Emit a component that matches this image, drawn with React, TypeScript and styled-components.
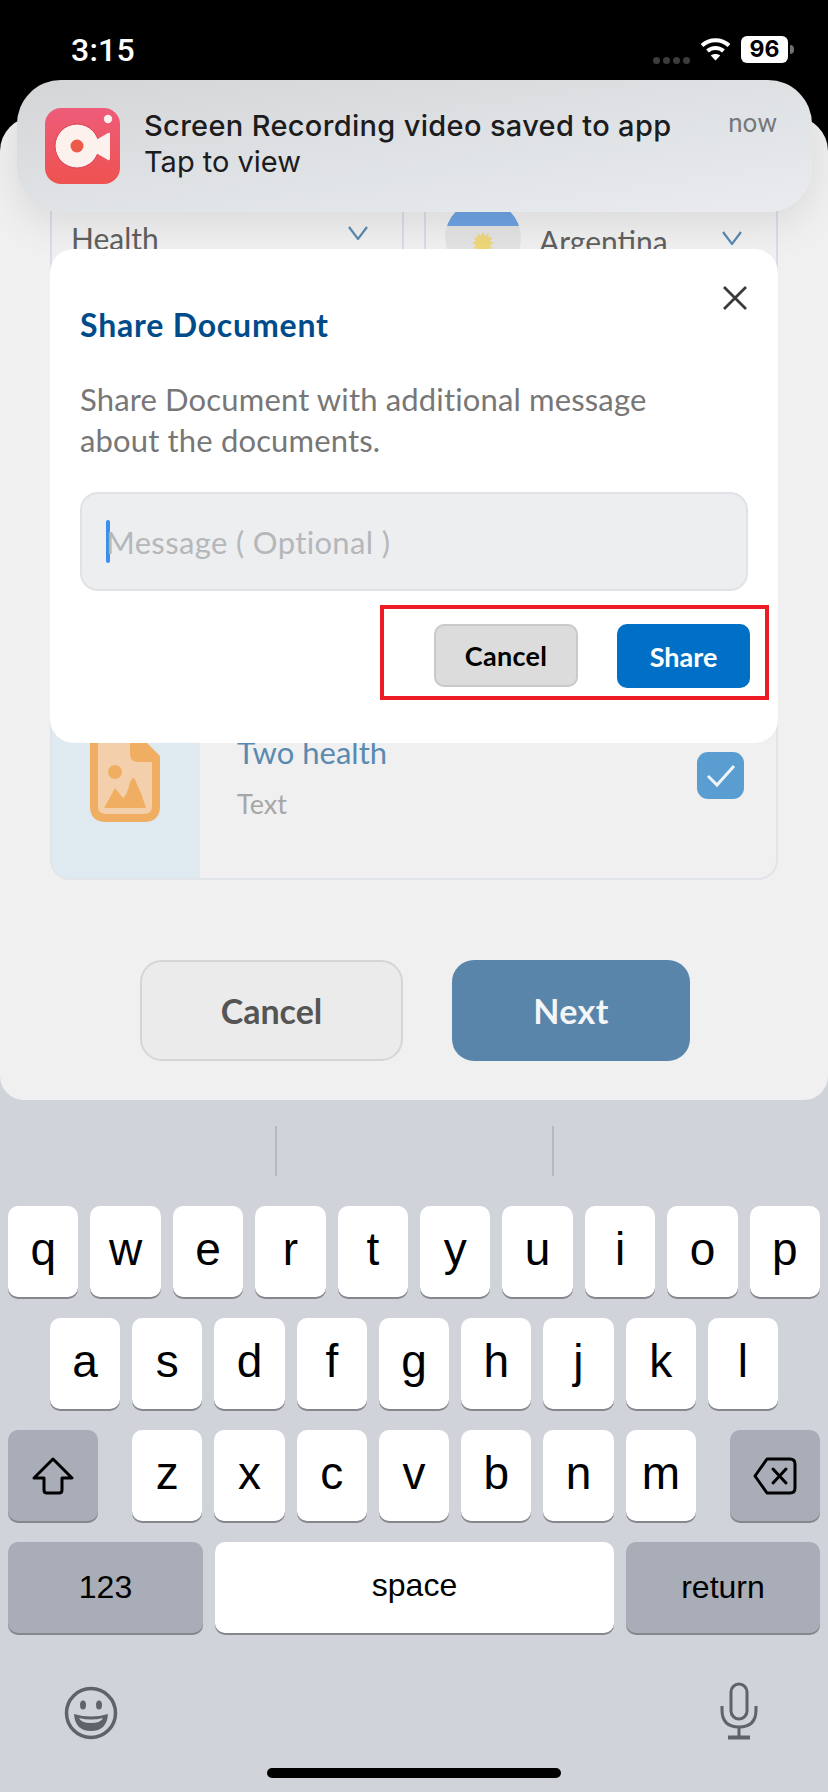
import React from "react";
import styled, { createGlobalStyle } from "styled-components";

const Global = createGlobalStyle`
  html, body { margin: 0; padding: 0; background: #000; }
  * { box-sizing: border-box; }
`;

const Frame = styled.div`
  position: relative;
  width: 828px;
  height: 1792px;
  overflow: hidden;
  display: flex;
  flex-direction: column;
  background: #d0d3da;
  font-family: Lato, "Open Sans", sans-serif;
`;

const StatusBar = styled.div`
  height: 117px;
  flex: none;
  background: #000;
  color: #fff;
  display: flex;
  justify-content: space-between;
  align-items: flex-start;
  padding: 36px 40px 0 71px;
`;
const Time = styled.div`
  font-family: Roboto, sans-serif;
  font-weight: 500;
  font-size: 32px;
  line-height: 28px;
  letter-spacing: 0.2px;
`;
const StatusIcons = styled.div`
  display: flex;
  align-items: flex-start;
`;
const SignalDots = styled.div`
  display: flex;
  gap: 3px;
  margin: 21px 10px 0 0;
`;
const SignalDot = styled.i`
  width: 7px;
  height: 7px;
  border-radius: 50%;
  background: #3d3d3d;
`;
const Battery = styled.div`
  width: 47px;
  height: 27px;
  margin-left: 10px;
  border-radius: 6px;
  background: #fff;
  color: #000;
  font-family: Inter, sans-serif;
  font-weight: 700;
  font-size: 23px;
  line-height: 27px;
  text-align: center;
  position: relative;
  &::after {
    content: "";
    position: absolute;
    right: -6px;
    top: 9px;
    width: 4px;
    height: 9px;
    border-radius: 0 4px 4px 0;
    background: #6f6f6f;
  }
`;

const SheetArea = styled.div`
  height: 983px;
  flex: none;
  background: linear-gradient(#000 50%, #d0d3da 50%);
`;
const Sheet = styled.div`
  height: 100%;
  background: #f0f0f0;
  border-radius: 34px 34px 24px 24px;
  padding: 71px 50px 0 50px;
  display: flex;
  flex-direction: column;
`;
const SelectRow = styled.div`
  display: flex;
  gap: 20px;
`;
const Select = styled.div`
  flex: 1;
  height: 100px;
  border: 2px solid #d6dde6;
  display: flex;
  align-items: center;
  padding: 0 34px 0 ${(p: { $pad: number }) => p.$pad}px;
  color: #5f5f5f;
  font-size: 30px;
`;
const SelectLabel = styled.span`
  flex: 1;
  position: relative;
  top: ${(p: { $drop: number }) => p.$drop}px;
`;
const FlagSlot = styled.svg`
  width: 76px;
  height: 76px;
  margin-right: 18px;
  flex: none;
`;
const Chevron = styled.svg`
  width: 20px;
  height: 14px;
  flex: none;
  position: relative;
  top: ${(p: { $drop: number }) => p.$drop}px;
`;

const ListCard = styled.div`
  margin-top: 22px;
  height: 570px;
  border: 2px solid #e1e4e8;
  border-radius: 20px;
  overflow: hidden;
  display: flex;
  flex-direction: column;
  justify-content: flex-end;
`;
const ListRow = styled.div`
  height: 205px;
  display: flex;
  align-items: center;
`;
const Thumb = styled.div`
  width: 148px;
  height: 100%;
  flex: none;
  padding-right: 3px;
  background: #dfe9f0;
  display: flex;
  align-items: center;
  justify-content: center;
`;
const RowText = styled.div`
  flex: 1;
  padding-left: 37px;
  padding-top: 2px;
`;
const RowTitle = styled.div`
  font-size: 31px;
  line-height: 36px;
  color: #5a8ab0;
`;
const RowSub = styled.div`
  font-size: 27px;
  line-height: 30px;
  margin-top: 19px;
  color: #a6a6a6;
`;
const CheckBox = styled.div`
  width: 47px;
  height: 47px;
  margin-right: 32px;
  border-radius: 11px;
  background: #5a9dd0;
  display: flex;
  align-items: center;
  justify-content: center;
`;

const Actions = styled.div`
  margin: 80px 0 0 90px;
  display: flex;
  gap: 49px;
`;
const GhostButton = styled.div`
  width: 263px;
  height: 101px;
  border: 2px solid #d5d5d5;
  border-radius: 22px;
  background: #ebebeb;
  color: #555;
  font-weight: 700;
  font-size: 34px;
  display: flex;
  align-items: center;
  justify-content: center;
`;
const NextButton = styled(GhostButton)`
  width: 238px;
  border: none;
  background: #5985aa;
  color: #f3f5f7;
  letter-spacing: 0.4px;
`;

const Keyboard = styled.div`
  flex: 1;
  background: #d0d3da;
  display: flex;
  flex-direction: column;
  align-items: stretch;
`;
const Suggestions = styled.div`
  height: 106px;
  padding-top: 26px;
  display: flex;
  justify-content: center;
  gap: 275px;
`;
const Divider = styled.i`
  width: 2px;
  height: 50px;
  background: #b6b9be;
`;
const KeyRow = styled.div`
  display: flex;
  height: 91px;
  margin-bottom: 21px;
  padding: 0 ${(p: { $pad: number }) => p.$pad}px;
  gap: 12px;
`;
const Key = styled.div`
  flex: 1;
  min-width: 0;
  background: #fff;
  border-radius: 10px;
  box-shadow: 0 2px 0 #85878c;
  color: #000;
  font-family: "Liberation Sans", Arial, sans-serif;
  font-size: 46px;
  padding-bottom: 6px;
  display: flex;
  align-items: center;
  justify-content: center;
`;
const ModKey = styled(Key)`
  flex: none;
  width: ${(p: { $w: number }) => p.$w}px;
  background: #a8adb7;
  font-size: 32px;
  padding-bottom: 0;
`;
const SpaceKey = styled(Key)`
  font-size: 32px;
  padding-bottom: 4px;
`;
const LetterGroup = styled.div`
  flex: 1;
  display: flex;
  gap: 12px;
  margin: 0 22px;
`;
const BottomIcons = styled.div`
  display: flex;
  justify-content: space-between;
  align-items: flex-end;
  padding: 28px 70px 0 64px;
`;
const HomeBar = styled.div`
  width: 294px;
  height: 10px;
  margin: 28px auto 0;
  border-radius: 5px;
  background: #000;
`;

const Banner = styled.div`
  position: absolute;
  left: 17px;
  top: 80px;
  width: 795px;
  height: 132px;
  border-radius: 44px;
  background: linear-gradient(172deg, #d4d5d7 0%, #e1e4e7 60%, #e9ebee 100%);
  box-shadow: 0 10px 40px rgba(0, 0, 0, 0.1);
  display: flex;
  padding: 28px 35px 0 28px;
`;
const AppIcon = styled.svg`
  width: 75px;
  height: 76px;
  flex: none;
`;
const BannerText = styled.div`
  flex: 1;
  padding-left: 24px;
  font-family: Inter, sans-serif;
  font-size: 29px;
  line-height: 36px;
  color: #1c1c1e;
`;
const BannerTitle = styled.div`
  font-weight: 500;
  letter-spacing: 0.33px;
`;
const BannerTime = styled.div`
  font-family: Roboto, sans-serif;
  font-size: 26px;
  line-height: 30px;
  color: #77787a;
`;

const Modal = styled.div`
  position: absolute;
  left: 50px;
  top: 249px;
  width: 728px;
  height: 494px;
  border-radius: 24px;
  background: #fff;
  padding: 36px 30px 0 30px;
  display: flex;
  flex-direction: column;
`;
const ModalHead = styled.div`
  display: flex;
  justify-content: space-between;
  align-items: flex-start;
`;
const ModalTitle = styled.div`
  margin-top: 20px;
  font-weight: 700;
  font-size: 32px;
  letter-spacing: 0.8px;
  line-height: 40px;
  color: #004c8b;
`;
const CloseIcon = styled.svg`
  width: 26px;
  height: 26px;
`;
const ModalBody = styled.div`
  margin-top: 34px;
  font-size: 31px;
  letter-spacing: 0.15px;
  line-height: 41px;
  color: #777;
`;
const MessageBox = styled.div`
  margin-top: 31px;
  height: 99px;
  border: 2px solid #e0e2e5;
  border-radius: 18px;
  background: #edeef0;
  display: flex;
  align-items: center;
  padding-left: 24px;
  font-size: 31px;
  letter-spacing: 0.35px;
  color: #b5b7ba;
`;
const Caret = styled.i`
  width: 4px;
  height: 43px;
  margin-right: -4px;
  border-radius: 2px;
  background: #3e8ef0;
`;
const Highlight = styled.div`
  align-self: flex-end;
  margin: 14px -21px 0 0;
  width: 389px;
  height: 95px;
  border: 4px solid #ed1c24;
  padding: 15px 15px 0 50px;
  display: flex;
  justify-content: space-between;
  align-items: flex-start;
`;
const SmallCancel = styled.div`
  width: 144px;
  height: 63px;
  border: 2px solid #c9c9c9;
  border-radius: 10px;
  background: #dcdcdc;
  color: #000;
  font-weight: 700;
  font-size: 27px;
  letter-spacing: 0.3px;
  display: flex;
  align-items: center;
  justify-content: center;
`;
const SmallShare = styled(SmallCancel)`
  width: 133px;
  height: 64px;
  border: none;
  background: #0070c6;
  color: #fff;
  letter-spacing: 0;
`;

const top = ["q", "w", "e", "r", "t", "y", "u", "i", "o", "p"];
const mid = ["a", "s", "d", "f", "g", "h", "j", "k", "l"];
const low = ["z", "x", "c", "v", "b", "n", "m"];

export default function App() {
  return (
    <Frame>
      <Global />
      <StatusBar>
        <Time>3:15</Time>
        <StatusIcons>
          <SignalDots>
            <SignalDot /><SignalDot /><SignalDot /><SignalDot />
          </SignalDots>
          <svg width="31" height="25" viewBox="0 0 31 25" fill="none" stroke="#fff" strokeWidth="4">
            <path d="M2 9.5C9.5 2.5 21.5 2.5 29 9.5" />
            <path d="M7.5 15C12 11 19 11 23.5 15" />
            <path d="M15.5 24.5L10.8 19.6C13.3 17.6 17.7 17.6 20.2 19.6Z" fill="#fff" stroke="none" />
          </svg>
          <Battery>96</Battery>
        </StatusIcons>
      </StatusBar>

      <SheetArea>
        <Sheet>
          <SelectRow>
            <Select $pad={19}>
              <SelectLabel $drop={0}>Health</SelectLabel>
              <Chevron $drop={-5} viewBox="0 0 20 14" fill="none" stroke="#5a8ab0" strokeWidth="2.2">
                <path d="M1 1L10 13L19 1" />
              </Chevron>
            </Select>
            <Select $pad={19}>
              <FlagSlot viewBox="0 0 76 76">
                <defs>
                  <clipPath id="flagClip"><circle cx="38" cy="38" r="38" /></clipPath>
                </defs>
                <g clipPath="url(#flagClip)">
                  <rect width="76" height="76" fill="#e3e3e3" />
                  <rect width="76" height="26" fill="#6da3e2" />
                  <path
                    d="M38 32L40 36L43.5 33.5L43.5 37.5L47.5 37.5L45 41L49 43L45 45L47.5 48.5L43.5 48.5L43.5 52.5L40 50L38 54L36 50L32.5 52.5L32.5 48.5L28.5 48.5L31 45L27 43L31 41L28.5 37.5L32.5 37.5L32.5 33.5L36 36Z"
                    fill="#eed67a"
                  />
                </g>
              </FlagSlot>
              <SelectLabel $drop={3}>Argentina</SelectLabel>
              <Chevron $drop={0} viewBox="0 0 20 14" fill="none" stroke="#5a8ab0" strokeWidth="2.2">
                <path d="M1 1L10 13L19 1" />
              </Chevron>
            </Select>
          </SelectRow>

          <ListCard>
            <ListRow>
              <Thumb>
                <svg width="70" height="92" viewBox="0 0 70 92">
                  <path d="M12 0H44L70 26V76Q70 92 54 92H16Q0 92 0 76V12Q0 0 12 0Z" fill="#f0ae62" />
                  <path d="M10 8H40V24Q40 32 48 32H62V76Q62 84 54 84H16Q8 84 8 76V10Z" fill="#f3d0ab" />
                  <circle cx="25" cy="42" r="7" fill="#f0ae62" />
                  <path d="M14 78L25 58L33 68Q37 66 40 52Q44 44 46 52Q52 64 56 78Z" fill="#f0ae62" />
                </svg>
              </Thumb>
              <RowText>
                <RowTitle>Two health</RowTitle>
                <RowSub>Text</RowSub>
              </RowText>
              <CheckBox>
                <svg width="30" height="24" viewBox="0 0 30 24" fill="none" stroke="#eef4f8" strokeWidth="3">
                  <path d="M2 12L11 21L28 2" />
                </svg>
              </CheckBox>
            </ListRow>
          </ListCard>

          <Actions>
            <GhostButton>Cancel</GhostButton>
            <NextButton>Next</NextButton>
          </Actions>
        </Sheet>
      </SheetArea>

      <Keyboard>
        <Suggestions>
          <Divider />
          <Divider />
        </Suggestions>
        <KeyRow $pad={8}>
          {top.map((k) => <Key key={k}>{k}</Key>)}
        </KeyRow>
        <KeyRow $pad={50}>
          {mid.map((k) => <Key key={k}>{k}</Key>)}
        </KeyRow>
        <KeyRow $pad={8}>
          <ModKey $w={90}>
            <svg width="42" height="38" viewBox="0 0 42 38" fill="none" stroke="#000" strokeWidth="3" strokeLinejoin="round">
              <path d="M21 2L40 21H30V33Q30 36 27 36H15Q12 36 12 33V21H2Z" />
            </svg>
          </ModKey>
          <LetterGroup>
            {low.map((k) => <Key key={k}>{k}</Key>)}
          </LetterGroup>
          <ModKey $w={90}>
            <svg width="44" height="38" viewBox="0 0 44 38" fill="none" stroke="#000" strokeWidth="3" strokeLinejoin="round">
              <path d="M14 2H37Q42 2 42 7V31Q42 36 37 36H14L2 19Z" />
              <path d="M20 12L33 26M33 12L20 26" strokeLinecap="round" />
            </svg>
          </ModKey>
        </KeyRow>
        <KeyRow $pad={8}>
          <ModKey $w={195}>123</ModKey>
          <SpaceKey>space</SpaceKey>
          <ModKey $w={194}>return</ModKey>
        </KeyRow>
        <BottomIcons>
          <svg width="54" height="54" viewBox="0 0 54 54" fill="none">
            <circle cx="27" cy="27" r="24.5" stroke="#5f6268" strokeWidth="3.5" />
            <ellipse cx="19" cy="19" rx="3" ry="4.5" fill="#5f6268" />
            <ellipse cx="35" cy="19" rx="3" ry="4.5" fill="#5f6268" />
            <path d="M10 28Q27 33 44 28Q43 45 27 45Q11 45 10 28Z" fill="#5f6268" />
            <path d="M15 32Q27 35 39 32Q37 37 27 37Q17 37 15 32Z" fill="#d0d3da" />
          </svg>
          <svg width="38" height="58" viewBox="0 0 38 58" fill="none" stroke="#5f6268" strokeWidth="3">
            <rect x="11" y="2" width="16" height="35" rx="8" />
            <path d="M2 24V28Q2 45 19 45Q36 45 36 28V24" />
            <path d="M19 45V54" />
            <path d="M8 55.5H30" strokeWidth="4" />
          </svg>
        </BottomIcons>
        <HomeBar />
      </Keyboard>

      <Banner>
        <AppIcon viewBox="0 0 75 76">
          <defs>
            <linearGradient id="appFill" x1="0" y1="0" x2="0" y2="1">
              <stop offset="0" stopColor="#ee5c7a" />
              <stop offset="1" stopColor="#ee5250" />
            </linearGradient>
          </defs>
          <rect width="75" height="76" rx="16" fill="url(#appFill)" />
          <circle cx="63" cy="11" r="4.2" fill="#fdf1ee" />
          <circle cx="32" cy="38" r="22" fill="#fdf1ee" stroke="#d93f4e" strokeWidth="1" />
          <circle cx="32" cy="38" r="6.5" fill="#ee5a4a" />
          <path d="M51 32L63 25Q65 24 65 26V50Q65 53 63 52L51 45Z" fill="#fdf1ee" />
        </AppIcon>
        <BannerText>
          <BannerTitle>Screen Recording video saved to app</BannerTitle>
          <div>Tap to view</div>
        </BannerText>
        <BannerTime>now</BannerTime>
      </Banner>

      <Modal>
        <ModalHead>
          <ModalTitle>Share Document</ModalTitle>
          <CloseIcon viewBox="0 0 26 26" fill="none" stroke="#3a3a3a" strokeWidth="2.8">
            <path d="M2 2L24 24M24 2L2 24" />
          </CloseIcon>
        </ModalHead>
        <ModalBody>
          Share Document with additional message
          <br />
          about the documents.
        </ModalBody>
        <MessageBox>
          <Caret />
          Message ( Optional )
        </MessageBox>
        <Highlight>
          <SmallCancel>Cancel</SmallCancel>
          <SmallShare>Share</SmallShare>
        </Highlight>
      </Modal>
    </Frame>
  );
}
